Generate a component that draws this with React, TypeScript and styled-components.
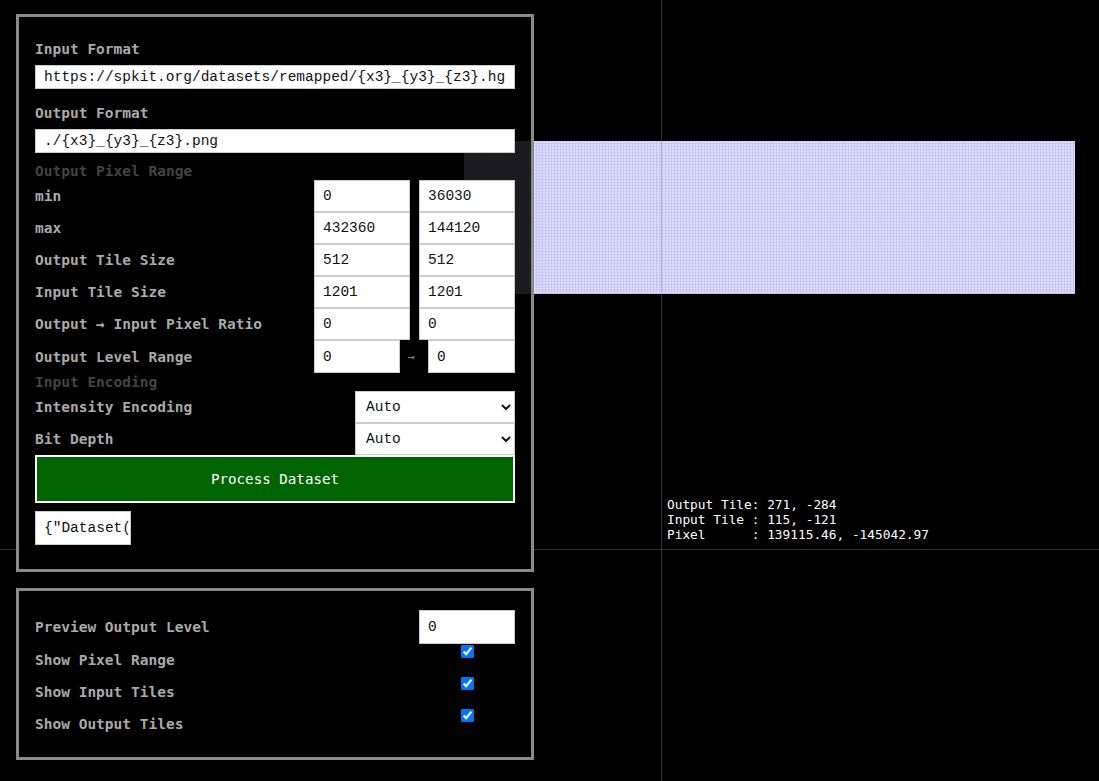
import styled, { createGlobalStyle } from 'styled-components';

const GlobalStyle = createGlobalStyle`
  html, body {
    margin: 0;
    padding: 0;
    background: #000;
  }
  body {
    font-family: 'DejaVu Sans Mono', 'Liberation Mono', monospace;
    font-size: 14.5px;
  }
`;

const fieldFont = `'Liberation Mono', 'DejaVu Sans Mono', monospace`;

const Page = styled.div`
  position: relative;
  width: 100vw;
  height: 100vh;
  overflow: hidden;
  background: #000;
`;

// the preview canvas behind the panels
const Canvas = styled.div`
  position: absolute;
  inset: 0;
`;

const PixelRange = styled.div`
  position: absolute;
  left: 464px;
  top: 141px;
  width: 611px;
  height: 153px;
  background-color: #dadafd;
  background-image: repeating-linear-gradient(90deg, rgba(140, 140, 210, 0.22) 0 1px, transparent 1px 3px),
    repeating-linear-gradient(0deg, rgba(140, 140, 210, 0.18) 0 1px, transparent 1px 3px);
`;

const AxisV = styled.div`
  position: absolute;
  left: 661px;
  top: 0;
  width: 1px;
  height: 100%;
  background: rgba(128, 128, 128, 0.4);
`;

const AxisH = styled.div`
  position: absolute;
  left: 0;
  top: 549px;
  width: 100%;
  height: 1px;
  background: rgba(128, 128, 128, 0.4);
`;

const Origin = styled.div`
  position: absolute;
  left: 661px;
  top: 549px;
  width: 1px;
  height: 1px;
  background: #7a5230;
`;

const Readout = styled.pre`
  position: absolute;
  left: 667px;
  top: 497px;
  margin: 0;
  color: #fff;
  font-family: 'DejaVu Sans Mono', monospace;
  font-size: 12.8px;
  line-height: 15px;
`;

const Sidebar = styled.div`
  position: relative;
  z-index: 1;
  display: flex;
  flex-direction: column;
  gap: 16px;
  width: 518px;
  padding: 14px 0 0 16px;
`;

const Panel = styled.div<{ $pad: string }>`
  display: flex;
  flex-direction: column;
  border: 3px solid #8a8a8a;
  background: rgba(0, 0, 0, 0.87);
  padding: ${(p) => p.$pad};
`;

const FieldLabel = styled.div<{ $top?: number }>`
  color: #aaa;
  font-weight: 700;
  line-height: 24px;
  margin-top: ${(p) => p.$top || 0}px;
  margin-bottom: 4px;
`;

const TextField = styled.input`
  box-sizing: border-box;
  width: 100%;
  height: 24px;
  margin: 0;
  padding: 0 8px;
  border: 1px solid #ccc;
  background: #fff;
  color: #111;
  font-family: ${fieldFont};
  font-size: 14.5px;
  outline: none;
`;

const SectionHeader = styled.div<{ $top?: number }>`
  color: #444;
  font-weight: 700;
  line-height: 18px;
  margin-top: ${(p) => p.$top || 0}px;
`;

const RangeGrid = styled.div`
  display: grid;
  grid-template-columns: 1fr 96px 96px;
  grid-template-rows: repeat(5, 32px) 33px;
  column-gap: 9px;
  align-items: center;
`;

const RowLabel = styled.div`
  color: #aaa;
  font-weight: 700;
  white-space: nowrap;
`;

const Cell = styled.input<{ $h?: number }>`
  box-sizing: border-box;
  width: 100%;
  height: ${(p) => p.$h || 32}px;
  margin: 0;
  padding: 0 8px;
  border: 1px solid #ccc;
  background: #fff;
  color: #111;
  font-family: ${fieldFont};
  font-size: 14.5px;
  outline: none;
  align-self: stretch;
`;

const LevelPair = styled.div`
  grid-column: span 2;
  align-self: stretch;
  display: grid;
  grid-template-columns: 86px 1fr 87px;
  align-items: center;
`;

const Arrow = styled.span`
  color: #888;
  text-align: center;
  font-size: 12px;
  padding-right: 6px;
`;

const SelectGrid = styled.div`
  display: grid;
  grid-template-columns: 1fr 160px;
  grid-auto-rows: 32px;
  align-items: center;
`;

const Picker = styled.select`
  box-sizing: border-box;
  width: 160px;
  height: 32px;
  margin: 0;
  padding: 0 6px;
  border: 1px solid #ccc;
  border-radius: 0;
  background: #fff;
  color: #111;
  font-family: ${fieldFont};
  font-size: 14.5px;
  outline: none;
`;

const ProcessButton = styled.button`
  height: 48px;
  width: 100%;
  margin: 0;
  border: 2px solid #fff;
  background: #006400;
  color: #fff;
  font-family: inherit;
  font-size: 14.2px;
  cursor: pointer;
`;

const ConfigBox = styled.input`
  box-sizing: border-box;
  width: 96px;
  height: 34px;
  margin: 8px 0 0;
  padding: 0 1px 0 8px;
  border: 1px solid #ccc;
  background: #fff;
  color: #111;
  font-family: ${fieldFont};
  font-size: 14.5px;
  outline: none;
`;

const PreviewGrid = styled.div`
  display: grid;
  grid-template-columns: 1fr 96px;
  grid-template-rows: 34px repeat(3, 32px);
  align-items: center;
`;

const Check = styled.input`
  justify-self: center;
  align-self: start;
  width: 13px;
  height: 13px;
  margin: 1px 0 0;
`;

const rangeRows = [
  { label: 'min', a: '0', b: '36030' },
  { label: 'max', a: '432360', b: '144120' },
  { label: 'Output Tile Size', a: '512', b: '512' },
  { label: 'Input Tile Size', a: '1201', b: '1201' },
  { label: 'Output → Input Pixel Ratio', a: '0', b: '0' },
];

const toggles = ['Show Pixel Range', 'Show Input Tiles', 'Show Output Tiles'];

export default function App() {
  return (
    <Page>
      <GlobalStyle />
      <Canvas>
        <PixelRange />
        <AxisV />
        <AxisH />
        <Origin />
        <Readout>{`Output Tile: 271, -284\nInput Tile : 115, -121\nPixel      : 139115.46, -145042.97`}</Readout>
      </Canvas>

      <Sidebar>
        <Panel $pad='20px 16px 24px'>
          <FieldLabel>Input Format</FieldLabel>
          <TextField defaultValue='https://spkit.org/datasets/remapped/{x3}_{y3}_{z3}.hgt' />
          <FieldLabel $top={12}>Output Format</FieldLabel>
          <TextField defaultValue='./{x3}_{y3}_{z3}.png' />

          <SectionHeader $top={9}>Output Pixel Range</SectionHeader>
          <RangeGrid>
            {rangeRows.map((row) => (
              <>
                <RowLabel key={row.label}>{row.label}</RowLabel>
                <Cell defaultValue={row.a} />
                <Cell defaultValue={row.b} />
              </>
            ))}
            <RowLabel>Output Level Range</RowLabel>
            <LevelPair>
              <Cell $h={33} defaultValue='0' />
              <Arrow>→</Arrow>
              <Cell $h={33} defaultValue='0' />
            </LevelPair>
          </RangeGrid>

          <SectionHeader>Input Encoding</SectionHeader>
          <SelectGrid>
            <RowLabel>Intensity Encoding</RowLabel>
            <Picker defaultValue='auto'>
              <option value='auto'>Auto</option>
            </Picker>
            <RowLabel>Bit Depth</RowLabel>
            <Picker defaultValue='auto'>
              <option value='auto'>Auto</option>
            </Picker>
          </SelectGrid>

          <ProcessButton>Process Dataset</ProcessButton>
          <ConfigBox defaultValue='{"Dataset(Config":{}}' />
        </Panel>

        <Panel $pad='19px 16px 17px'>
          <PreviewGrid>
            <RowLabel>Preview Output Level</RowLabel>
            <Cell $h={34} defaultValue='0' />
            {toggles.map((t) => (
              <>
                <RowLabel key={t}>{t}</RowLabel>
                <Check type='checkbox' defaultChecked />
              </>
            ))}
          </PreviewGrid>
        </Panel>
      </Sidebar>
    </Page>
  );
}
